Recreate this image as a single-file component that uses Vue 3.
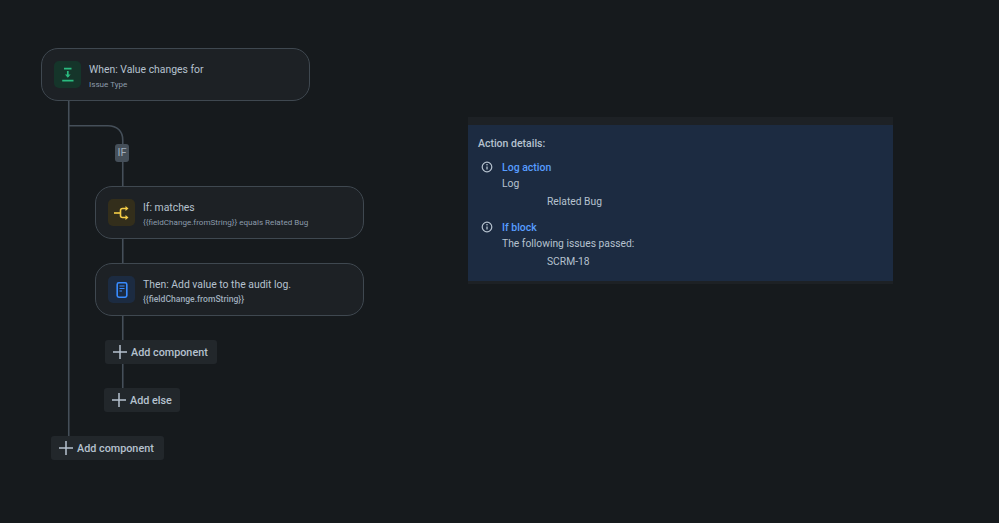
<script setup>
const nodes = [
  { id: 'when', title: 'When: Value changes for', sub: 'Issue Type', tone: 'green', icon: 'trigger' },
  { id: 'cond', title: 'If: matches', sub: '{{fieldChange.fromString}} equals Related Bug', tone: 'yellow', icon: 'branch' },
  { id: 'then', title: 'Then: Add value to the audit log.', sub: '{{fieldChange.fromString}}', tone: 'blue', icon: 'doc', strong: true }
]
const adds = [
  { id: 'a1', label: 'Add component' },
  { id: 'a2', label: 'Add else' },
  { id: 'a3', label: 'Add component' }
]
const details = [
  { title: 'Log action', body: 'Log', item: 'Related Bug' },
  { title: 'If block', body: 'The following issues passed:', item: 'SCRM-18' }
]
</script>

<template>
  <div class="page">
    <div class="diagram">
      <svg class="wires" width="370" height="470" viewBox="0 0 370 470" fill="none">
        <path d="M68.75 100V437" />
        <path d="M69 125.75H108C117 125.75 122.75 131 122.75 140V187" />
        <path d="M122.75 238V264M122.75 315V341M122.75 363V389" />
      </svg>
      <span class="badge">IF</span>
      <div v-for="n in nodes" :key="n.id" class="node" :class="n.id">
        <div class="tile" :class="n.tone">
          <svg v-if="n.icon === 'trigger'" width="16" height="18" viewBox="0 0 16 18" fill="none">
            <path d="M4 2.7H11.5M2.2 14.7H13.5" stroke="currentColor" stroke-width="1.7" />
            <path d="M7.8 5V11" stroke="currentColor" stroke-width="1.7" />
            <path d="M5 8.5H10.6L7.8 11.8Z" fill="currentColor" />
          </svg>
          <svg v-else-if="n.icon === 'branch'" width="18" height="16" viewBox="0 0 18 16" fill="none">
            <path d="M1 8H7" stroke="currentColor" stroke-width="1.6" />
            <path d="M13 3.5H9.5Q7.5 3.5 7.5 5.5V10.5Q7.5 12.5 9.5 12.5H13" stroke="currentColor" stroke-width="1.6" />
            <path d="M12.5 1L15.5 3.5L12.5 6ZM12.5 10L15.5 12.5L12.5 15Z" fill="currentColor" />
          </svg>
          <svg v-else width="14" height="18" viewBox="0 0 14 18" fill="none">
            <rect x="2.2" y="1.8" width="9.6" height="14.4" rx="1.6" stroke="currentColor" stroke-width="1.6" />
            <path d="M4.5 5H9.5M4.5 7.5H9.5M4.5 10H7" stroke="currentColor" stroke-width="1.2" />
          </svg>
        </div>
        <div class="copy">
          <div class="title">{{ n.title }}</div>
          <div class="sub" :class="{ strong: n.strong }">{{ n.sub }}</div>
        </div>
      </div>
      <button v-for="a in adds" :key="a.id" class="add" :class="a.id">
        <svg width="16" height="16" viewBox="0 0 16 16" fill="none">
          <path d="M8 1V15M1 8H15" stroke="currentColor" stroke-width="1.5" />
        </svg>
        {{ a.label }}
      </button>
    </div>
    <section class="panel">
      <div class="panel-body">
        <h3>Action details:</h3>
        <div v-for="d in details" :key="d.title" class="detail">
          <svg class="info" width="12" height="12" viewBox="0 0 12 12" fill="none">
            <circle cx="6" cy="6" r="4.8" stroke="currentColor" stroke-width="1.2" />
            <path d="M6 5.4V8.6" stroke="currentColor" stroke-width="1.3" />
            <circle cx="6" cy="3.7" r=".8" fill="currentColor" />
          </svg>
          <div>
            <div class="link">{{ d.title }}</div>
            <div class="line">{{ d.body }}</div>
            <div class="line indent">{{ d.item }}</div>
          </div>
        </div>
      </div>
    </section>
  </div>
</template>

<style>
html, body { margin: 0; background: #161a1d; }
</style>

<style scoped>
.page {
  display: flex;
  align-items: flex-start;
  width: 999px;
  height: 523px;
  overflow: hidden;
  background: #161a1d;
  font-family: Roboto, "Noto Sans", sans-serif;
  color: #b6c2cf;
}
.diagram {
  position: relative;
  flex: 0 0 468px;
  height: 523px;
}
.wires {
  position: absolute;
  left: 0;
  top: 0;
}
.wires path {
  stroke: #454f59;
  stroke-width: 1.6;
}
.badge {
  position: absolute;
  left: 115px;
  top: 144px;
  width: 14px;
  height: 18px;
  border-radius: 3px;
  background: #454f59;
  color: #9fadbc;
  font-size: 11px;
  line-height: 18px;
  text-align: center;
}
.node {
  position: absolute;
  box-sizing: border-box;
  width: 269px;
  height: 53px;
  display: flex;
  align-items: center;
  gap: 8px;
  padding-left: 12px;
  background: #1d2125;
  border: 1px solid #3f4850;
  border-radius: 17px;
}
.when { left: 41px; top: 48px; }
.cond { left: 95px; top: 186px; }
.then { left: 95px; top: 263px; }
.tile {
  flex: none;
  width: 27px;
  height: 27px;
  border-radius: 5px;
  display: flex;
  align-items: center;
  justify-content: center;
}
.green { background: #15352a; color: #2abb7f; }
.yellow { background: #332e1b; color: #f5cd47; }
.blue { background: #1c2b41; color: #388bff; }
.copy { min-width: 0; padding-top: 2px; }
.title {
  font-size: 10.4px;
  line-height: 15px;
  color: #b6c2cf;
  white-space: nowrap;
}
.sub {
  margin-top: 1px;
  font-size: 8.1px;
  line-height: 12px;
  color: #8c9bab;
  white-space: nowrap;
}
.sub.strong { color: #9fadbc; font-size: 8.6px; font-weight: 500; }
.add {
  position: absolute;
  box-sizing: border-box;
  height: 24px;
  display: flex;
  align-items: center;
  gap: 3px;
  padding: 0 7px;
  border: 0;
  border-radius: 3px;
  background: #22272b;
  color: #b6c2cf;
  font-family: inherit;
  font-size: 10.8px;
  font-weight: 500;
  white-space: nowrap;
}
.add svg { flex: none; }
.a1 { left: 105px; top: 340px; width: 112px; }
.a2 { left: 104px; top: 388px; width: 76px; }
.a3 { left: 51px; top: 436px; width: 113px; }
.panel {
  box-sizing: border-box;
  width: 425px;
  height: 167px;
  margin-top: 117px;
  padding: 8px 0 3px;
  background: #1d2125;
}
.panel-body {
  box-sizing: border-box;
  height: 156px;
  padding: 11px 10px 0;
  background: #1c2b41;
}
h3 {
  margin: 0 0 9px;
  font-size: 10.5px;
  line-height: 15px;
  font-weight: 500;
  color: #b6c2cf;
}
.detail {
  display: flex;
  gap: 9px;
  padding-left: 3px;
  margin-bottom: 9px;
}
.info { flex: none; margin-top: 1px; color: #b6c2cf; }
.link {
  font-size: 10.5px;
  line-height: 15px;
  font-weight: 500;
  color: #579dff;
}
.line {
  font-size: 10.3px;
  line-height: 18px;
  color: #b6c2cf;
}
.indent { padding-left: 45px; }
</style>
